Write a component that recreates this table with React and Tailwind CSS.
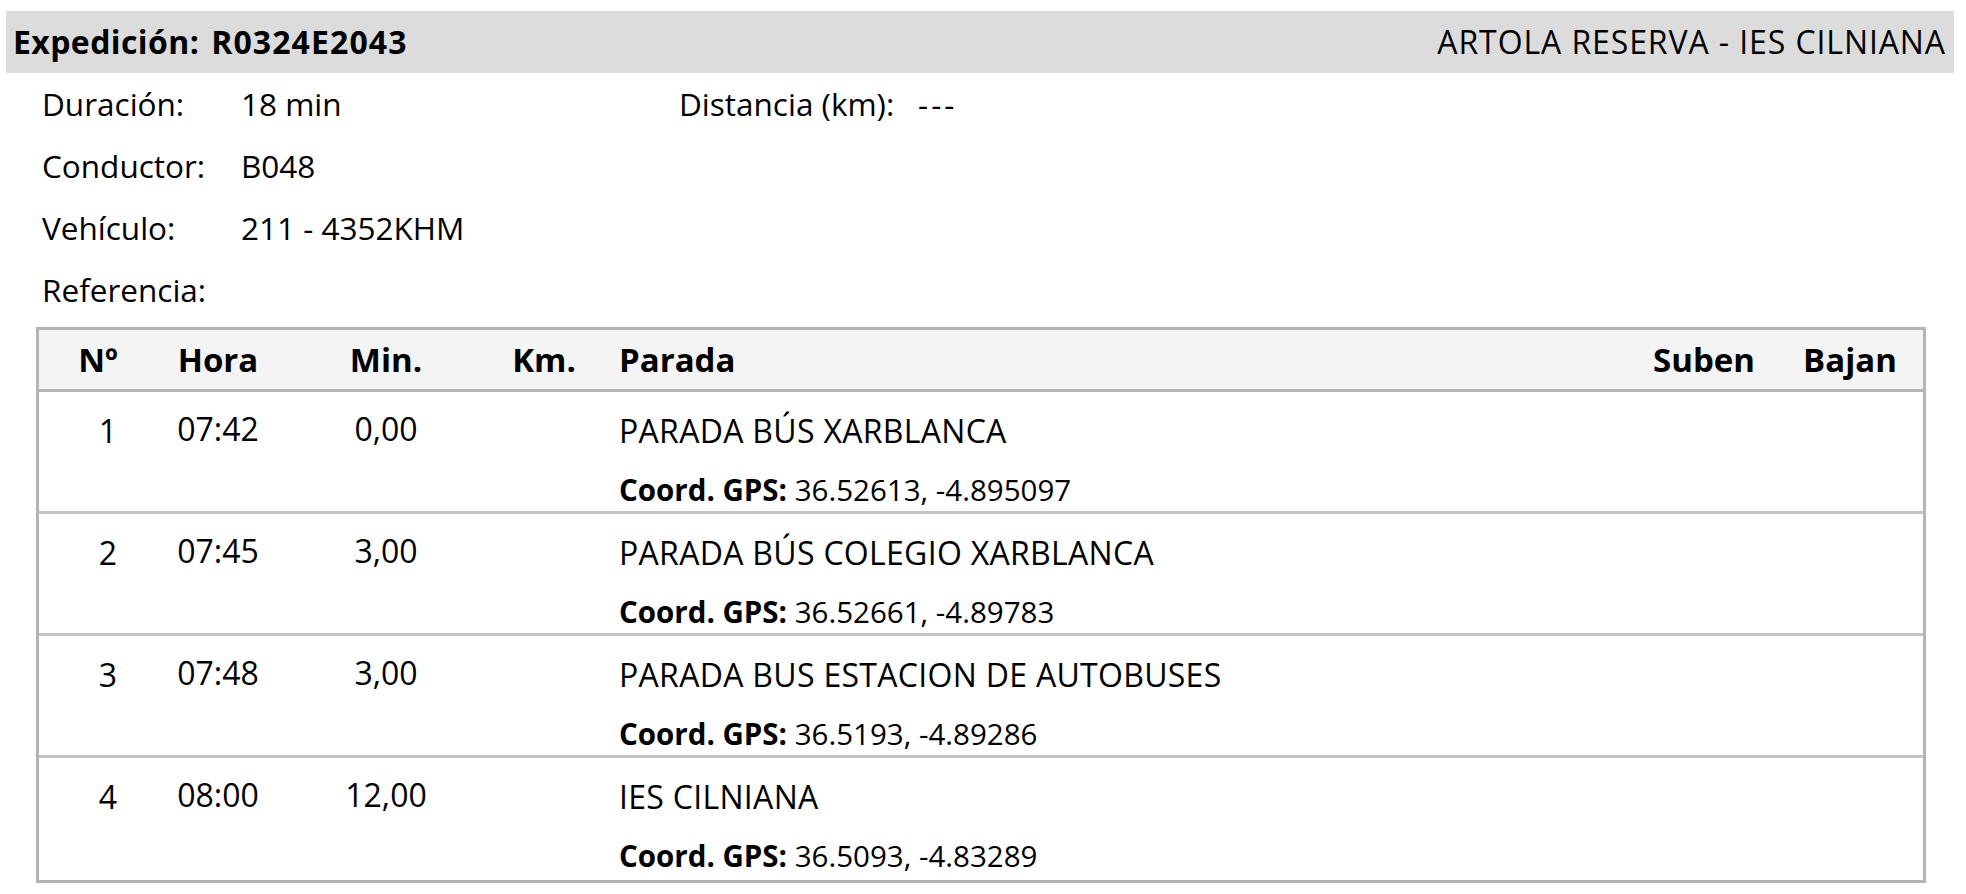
const info = [
  { label: 'Duración:', value: '18 min', extra: { label: 'Distancia (km):', value: '---' } },
  { label: 'Conductor:', value: 'B048' },
  { label: 'Vehículo:', value: '211 - 4352KHM' },
  { label: 'Referencia:', value: '' },
]

const stops = [
  { n: 1, hora: '07:42', min: '0,00', name: 'PARADA BÚS XARBLANCA', gps: '36.52613, -4.895097' },
  { n: 2, hora: '07:45', min: '3,00', name: 'PARADA BÚS COLEGIO XARBLANCA', gps: '36.52661, -4.89783' },
  { n: 3, hora: '07:48', min: '3,00', name: 'PARADA BUS ESTACION DE AUTOBUSES', gps: '36.5193, -4.89286' },
  { n: 4, hora: '08:00', min: '12,00', name: 'IES CILNIANA', gps: '36.5093, -4.83289' },
]

const cols = 'grid grid-cols-[118px_122px_214px_102px_1fr_146px_146px]'

export default function App() {
  return (
    <div className="min-h-screen bg-white pt-[11px] pl-[6px] pr-[12px] text-[31.5px] text-black font-['Open_Sans',sans-serif]">

      {/* Title bar */}
      <div className="flex items-center justify-between h-[62px] bg-[#dcdcdc] pl-[7px] pr-[8px]">
        <div className="font-bold text-[32px] tracking-[0.4px]">
          Expedición:<span className="ml-[12px] tracking-[1.1px]">R0324E2043</span>
        </div>
        <div className="text-[32px] tracking-[0.9px]">ARTOLA RESERVA - IES CILNIANA</div>
      </div>

      {/* Info */}
      <div className="pl-[36px]">
        {info.map((row) => (
          <div key={row.label} className="flex items-center h-[62px]">
            <span className="w-[199px]">{row.label}</span>
            <span className="w-[438px]">{row.value}</span>
            {row.extra && (
              <>
                <span className="w-[239px]">{row.extra.label}</span>
                <span className="tracking-[3px]">{row.extra.value}</span>
              </>
            )}
          </div>
        ))}
      </div>

      {/* Table */}
      <div className="mt-[6px] ml-[30px] mr-[28px] border-[3px] border-[#b4b4b4]">
        <div className={`${cols} h-[62px] items-center bg-[#f4f4f4] border-b-[3px] border-[#b4b4b4] font-bold text-[33px]`}>
          <div className="text-center">Nº</div>
          <div className="text-center">Hora</div>
          <div className="text-center">Min.</div>
          <div className="text-center">Km.</div>
          <div className="pl-[24px]">Parada</div>
          <div className="text-center">Suben</div>
          <div className="text-center">Bajan</div>
        </div>

        {stops.map((s, i) => (
          <div
            key={s.n}
            className={`${cols} h-[122px] leading-[44px] text-[32px] ${i < stops.length - 1 ? 'border-b-[3px] border-[#c4c4c4]' : ''}`}
          >
            <div className="pt-[17px] pl-[20px] text-center">{s.n}</div>
            <div className="pt-[15px] text-center">{s.hora}</div>
            <div className="pt-[15px] text-center">{s.min}</div>
            <div className="pt-[15px] text-center"></div>
            <div className="pl-[24px] pt-[17px] flex flex-col gap-[15px]">
              <span className="tracking-[0.3px]">{s.name}</span>
              <span className="text-[29.5px]">
                <b>Coord. GPS:</b> {s.gps}
              </span>
            </div>
            <div></div>
            <div></div>
          </div>
        ))}
      </div>
    </div>
  )
}
